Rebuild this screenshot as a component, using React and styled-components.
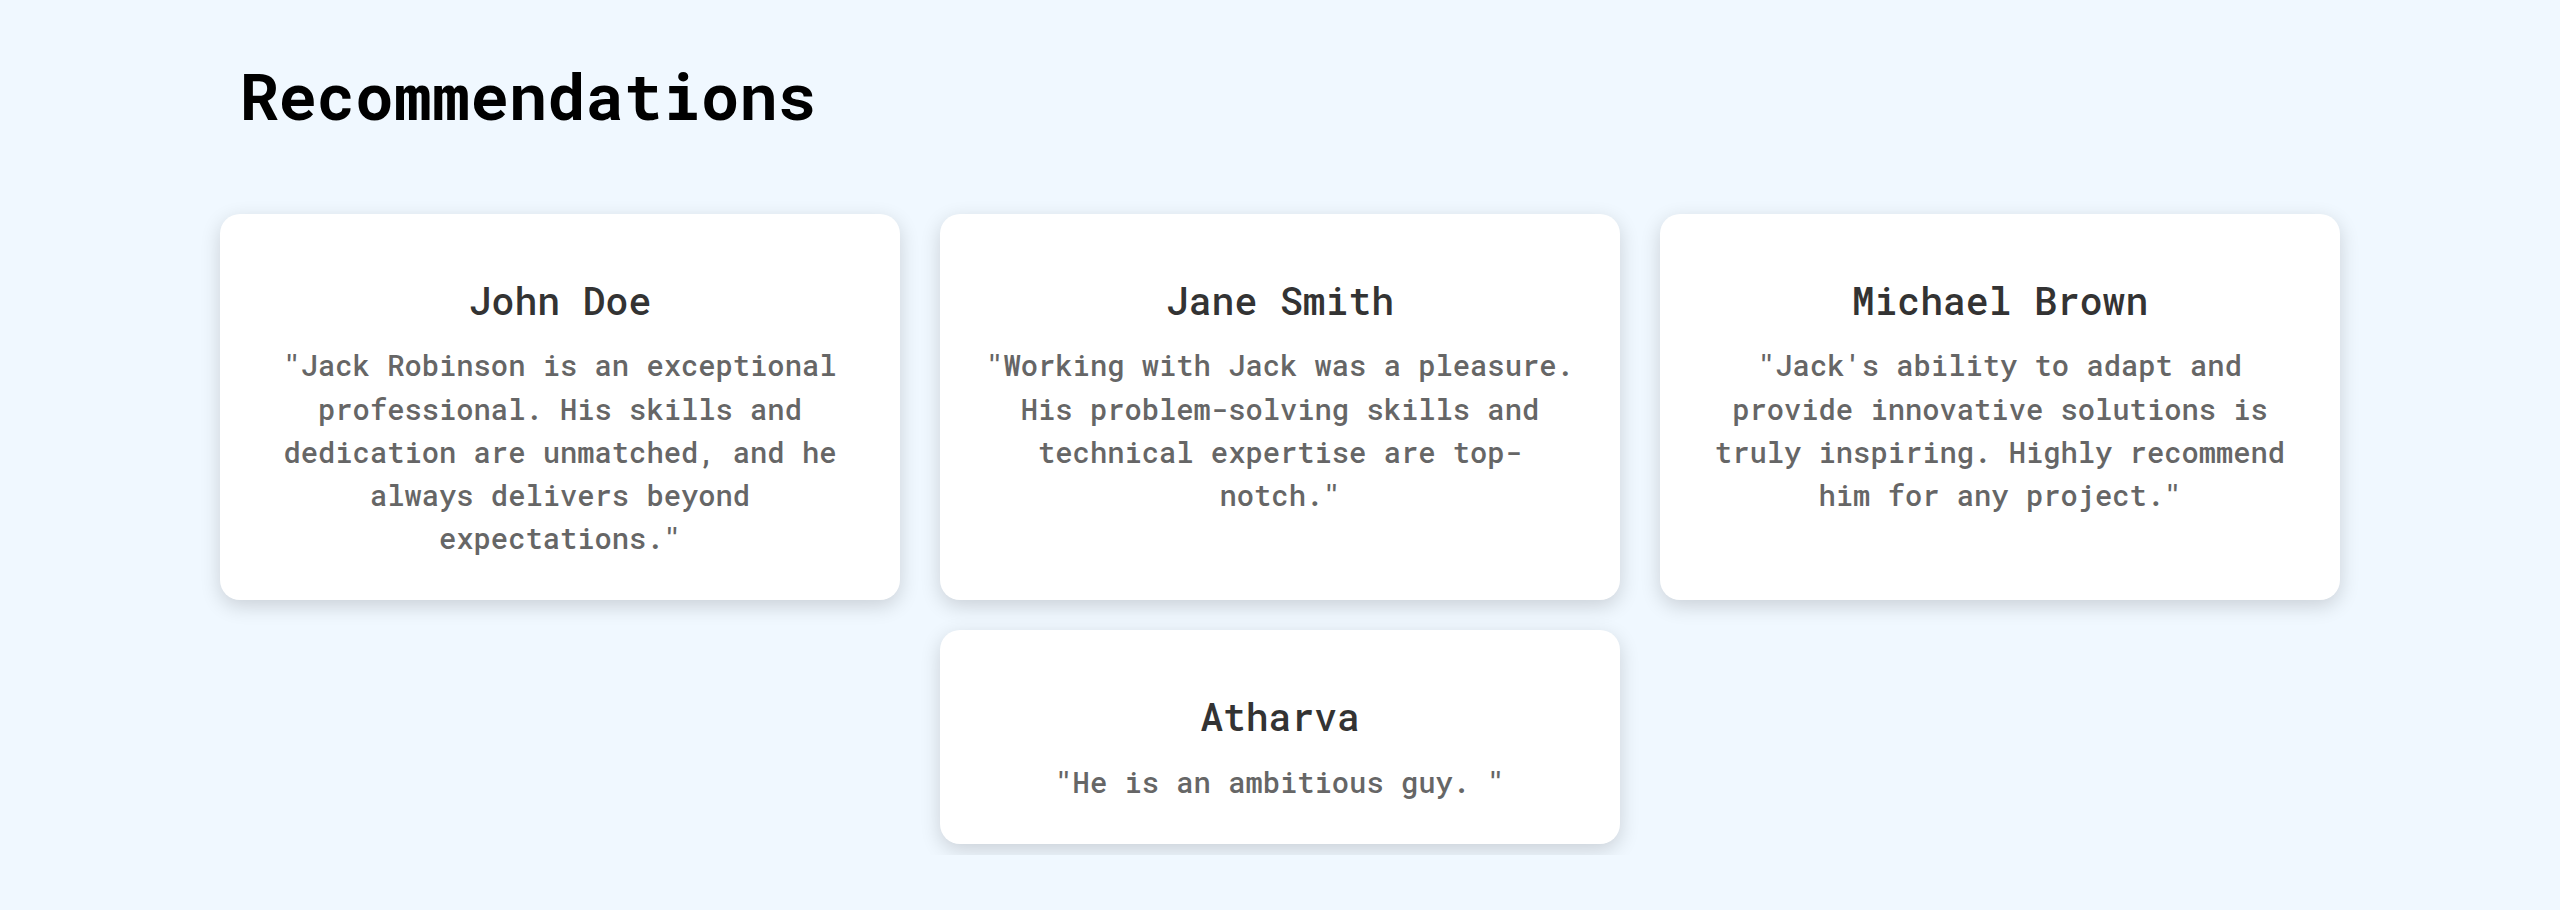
import React from "react";
import styled, { createGlobalStyle } from "styled-components";

const recommendations = [
  {
    name: "John Doe",
    text: "\"Jack Robinson is an exceptional professional. His skills and dedication are unmatched, and he always delivers beyond expectations.\"",
  },
  {
    name: "Jane Smith",
    text: "\"Working with Jack was a pleasure. His problem-solving skills and technical expertise are top-notch.\"",
  },
  {
    name: "Michael Brown",
    text: "\"Jack's ability to adapt and provide innovative solutions is truly inspiring. Highly recommend him for any project.\"",
  },
  {
    name: "Atharva",
    text: "\"He is an ambitious guy. \"",
  },
];

const App = () => {
  return (
    <>
      <GlobalStyle />
      <Section>
        <Inner>
          <Title>Recommendations</Title>
          <CardGrid>
            {recommendations.map((item) => (
              <Card key={item.name}>
                <Name>{item.name}</Name>
                <Quote>{item.text}</Quote>
              </Card>
            ))}
          </CardGrid>
        </Inner>
      </Section>
    </>
  );
};

const GlobalStyle = createGlobalStyle`
  html, body {
    margin: 0;
    background-color: aliceblue;
    font-family: "Roboto Mono", "DejaVu Sans Mono", monospace;
  }
`;

// overflow clips the last card's shadow just below it, as in the original
const Section = styled.section`
  overflow: hidden;
  padding: 57px 0 11px;
`;

const Inner = styled.div`
  width: 2120px;
  margin: 0 auto;
`;

const Title = styled.h1`
  margin: 0 0 80px;
  padding: 0 20px;
  font-size: 64px;
  line-height: 1.2;
  font-weight: 700;
  color: #000;
`;

const CardGrid = styled.div`
  display: flex;
  flex-wrap: wrap;
  justify-content: center;
  column-gap: 40px;
  row-gap: 30px;
`;

const Card = styled.div`
  box-sizing: border-box;
  width: 680px;
  padding: 64px 40px 40px;
  background-color: #fff;
  border-radius: 20px;
  box-shadow: 0 6px 20px rgba(0, 0, 0, 0.16);
  text-align: center;
`;

const Name = styled.h3`
  margin: 0 0 21px;
  font-size: 38px;
  line-height: 1.2;
  font-weight: 500;
  color: #333;
`;

const Quote = styled.p`
  margin: 0;
  font-size: 28.8px;
  line-height: 1.5;
  font-weight: 500;
  color: #666;
`;

export default App;
